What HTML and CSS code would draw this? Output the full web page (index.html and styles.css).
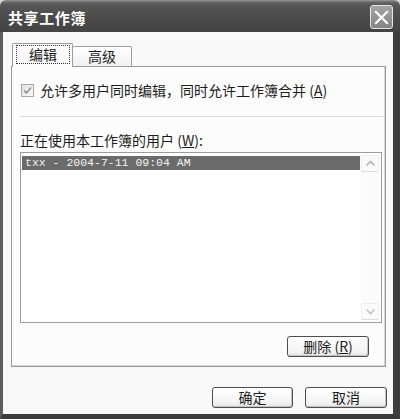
FILE: index.html
```html
<!DOCTYPE html>
<html lang="zh-CN">
<head>
<meta charset="utf-8">
<title>共享工作簿</title>
<link rel="stylesheet" href="styles.css">
</head>
<body>
<div class="window">
  <div class="titlebar">
    <span class="title">共享工作簿</span>
    <span class="close">
      <svg width="15" height="15" viewBox="0 0 15 15"><path d="M2 2 L13 13 M13 2 L2 13" stroke="#fff" stroke-width="2.2" stroke-linecap="square"/></svg>
    </span>
  </div>
  <div class="client">
    <div class="tabs">
      <div class="tab tab-active"><span class="focus">编辑</span></div>
      <div class="tab">高级</div>
    </div>
    <div class="panel">
      <div class="check-row">
        <span class="checkbox">
          <svg width="11" height="11" viewBox="0 0 11 11"><path d="M2 5.5 L4.5 8 L9 2.5" fill="none" stroke="#9a9a9a" stroke-width="1.8"/></svg>
        </span>
        <span class="label">允许多用户同时编辑，同时允许工作簿合并 (<u>A</u>)</span>
      </div>
      <div class="separator"></div>
      <div class="list-label">正在使用本工作簿的用户 (<u>W</u>):</div>
      <div class="listbox">
        <div class="list-items">
          <div class="list-item selected">txx - 2004-7-11 09:04 AM</div>
        </div>
        <div class="scrollbar">
          <span class="sb-btn">
            <svg width="11" height="7" viewBox="0 0 11 7"><path d="M1.5 5.5 L5.5 1.5 L9.5 5.5" fill="none" stroke="#b4b4b4" stroke-width="1.6"/></svg>
          </span>
          <span class="sb-track"></span>
          <span class="sb-btn">
            <svg width="11" height="7" viewBox="0 0 11 7"><path d="M1.5 1.5 L5.5 5.5 L9.5 1.5" fill="none" stroke="#c4c4c4" stroke-width="1.6"/></svg>
          </span>
        </div>
      </div>
      <div class="panel-actions">
        <button class="btn btn-delete">删除 (<u>R</u>)</button>
      </div>
    </div>
    <div class="footer">
      <button class="btn">确定</button>
      <button class="btn">取消</button>
    </div>
  </div>
</div>
</body>
</html>
```
FILE: styles.css
```css
* { box-sizing: border-box; }
html, body { margin: 0; padding: 0; }
body {
  width: 400px;
  height: 419px;
  background: #d8d8d8;
  font-family: "Noto Sans CJK SC", "Liberation Sans", sans-serif;
  color: #1c1c1c;
  overflow: hidden;
}
.window {
  width: 400px;
  height: 419px;
  display: flex;
  flex-direction: column;
}
.titlebar {
  height: 32px;
  flex: none;
  display: flex;
  align-items: center;
  justify-content: space-between;
  padding: 4px 7px 0 8px;
  background: linear-gradient(#9a9a9a 0, #6a6a6a 2px, #565656 5px, #4a4a4a 60%, #444 100%);
  border-radius: 6px 6px 0 0;
}
.title {
  color: #fff;
  font-size: 15px;
  font-weight: 700;
  letter-spacing: 0.6px;
  line-height: 18px;
}
.close {
  width: 23px;
  height: 24px;
  border: 1px solid #e6e6e6;
  border-radius: 3px;
  background: linear-gradient(#a4a4a4, #848484);
  display: flex;
  align-items: center;
  justify-content: center;
  margin-top: -2px;
}
.client {
  flex: 1;
  background: #f8f8f8;
  border-left: 3px solid #5c5c5c;
  border-right: 7px solid #3e3e3e;
  border-bottom: 5px solid #3a3a3a;
  padding: 11px 0 0 8px;
}
.tabs {
  display: flex;
  align-items: flex-end;
  height: 23px;
  margin-left: 1px;
}
.tab {
  width: 59px;
  height: 20px;
  border: 1px solid #9c9c9c;
  border-bottom: none;
  border-left: none;
  border-radius: 2px 2px 0 0;
  background: linear-gradient(#ffffff, #f0f0f0);
  font-size: 14px;
  line-height: 19px;
  text-align: center;
}
.tab-active {
  width: 61px;
  height: 24px;
  border-left: 1px solid #9c9c9c;
  background: #fcfcfc;
  position: relative;
  z-index: 1;
  margin-bottom: -1px;
  padding: 1px 2px 3px 3px;
}
.focus {
  display: block;
  height: 19px;
  border: 1px dotted #333;
  line-height: 17px;
}
.panel {
  width: 375px;
  border: 1px solid #9a9a9a;
  background: #fcfcfc;
  box-shadow: inset -1px -1px 0 #d6d6d6;
  padding: 14px 0 9px 0;
}
.check-row {
  height: 18px;
  display: flex;
  align-items: center;
  padding-left: 9px;
  gap: 6px;
}
.checkbox {
  width: 13px;
  height: 13px;
  border: 1px solid #a8a8a8;
  background: linear-gradient(135deg, #e2e2e2, #fafafa);
  display: flex;
  align-items: center;
  justify-content: center;
}
.label, .list-label {
  font-size: 14px;
  line-height: 18px;
  white-space: nowrap;
}
.separator {
  margin: 17px 2px 0 8px;
  height: 2px;
  border-top: 1px solid #dadada;
  border-bottom: 1px solid #ffffff;
}
.list-label {
  margin: 13px 0 0 8px;
}
.listbox {
  margin: 3px 3px 0 8px;
  height: 171px;
  border: 1px solid #9c9c9c;
  background: #fff;
  display: flex;
  padding: 2px 2px 2px 1px;
  gap: 1px;
}
.list-items {
  flex: 1;
}
.list-item {
  height: 14px;
  font-family: "Liberation Mono", "DejaVu Sans Mono", monospace;
  font-size: 11.5px;
  line-height: 14px;
  padding-left: 3px;
  margin-top: 1px;
}
.selected {
  background: #6b6b6b;
  color: #f4f4f4;
}
.scrollbar {
  width: 18px;
  display: flex;
  flex-direction: column;
  background: #fbfbfb;
}
.sb-btn {
  height: 17px;
  border: 1px solid #ececec;
  border-bottom-color: #dcdcdc;
  border-radius: 2px;
  display: flex;
  align-items: center;
  justify-content: center;
  background: #fafafa;
}
.sb-track { flex: 1; }
.panel-actions {
  display: flex;
  justify-content: flex-end;
  margin-top: 13px;
  padding-right: 16px;
}
.btn {
  width: 82px;
  height: 21px;
  border: 1px solid #4e4e4e;
  border-radius: 3px;
  background: linear-gradient(#ffffff, #f2f2f2 80%, #e2e2e2);
  box-shadow: inset -1px -1px 0 #c4c4c4;
  font-family: "Noto Sans CJK SC", "Liberation Sans", sans-serif;
  font-size: 14px;
  line-height: 17px;
  color: #1c1c1c;
  padding: 0;
}
.footer {
  display: flex;
  justify-content: flex-end;
  gap: 12px;
  margin-top: 20px;
  padding-right: 6px;
}
.footer .btn:first-child { width: 81px; }
```
